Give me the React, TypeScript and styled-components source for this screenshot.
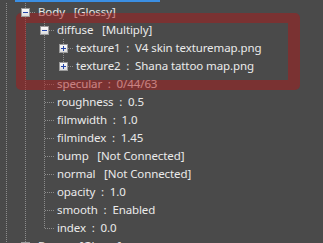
import React from 'react';
import styled, { createGlobalStyle, css } from 'styled-components';

type LineKind = 'none' | 'full' | 'top';

interface NodeRow {
    guides: LineKind[];
    branch?: boolean;
    expander?: 'plus' | 'minus';
    label: string;
}

const rows: NodeRow[] = [
    { guides: ['full', 'full'], expander: 'minus', label: 'Body\u00a0\u00a0 [Glossy]' },
    { guides: ['full', 'full', 'full'], expander: 'minus', label: 'diffuse\u00a0\u00a0 [Multiply]' },
    { guides: ['full', 'full', 'full', 'full'], expander: 'plus', label: 'texture1\u00a0 :\u00a0 V4 skin texturemap.png' },
    { guides: ['full', 'full', 'full', 'top'], expander: 'plus', label: 'texture2\u00a0 :\u00a0 Shana tattoo map.png' },
    { guides: ['full', 'full', 'full'], branch: true, label: 'specular\u00a0 :\u00a0 0/44/63' },
    { guides: ['full', 'full', 'full'], branch: true, label: 'roughness\u00a0 :\u00a0 0.5' },
    { guides: ['full', 'full', 'full'], branch: true, label: 'filmwidth\u00a0 :\u00a0 1.0' },
    { guides: ['full', 'full', 'full'], branch: true, label: 'filmindex\u00a0 :\u00a0 1.45' },
    { guides: ['full', 'full', 'full'], branch: true, label: 'bump\u00a0\u00a0 [Not Connected]' },
    { guides: ['full', 'full', 'full'], branch: true, label: 'normal\u00a0\u00a0 [Not Connected]' },
    { guides: ['full', 'full', 'full'], branch: true, label: 'opacity\u00a0 :\u00a0 1.0' },
    { guides: ['full', 'full', 'full'], branch: true, label: 'smooth\u00a0 :\u00a0 Enabled' },
    { guides: ['full', 'full', 'top'], branch: true, label: 'index\u00a0 :\u00a0 0.0' },
    { guides: ['full', 'full'], expander: 'plus', label: 'Brows\u00a0\u00a0 [Glossy]' },
];

const App: React.FC = () => {
    return (
        <Panel>
            <GlobalStyle />
            <Tree>
                <SelectedRow>
                    <Highlight />
                </SelectedRow>
                {rows.map((row, i) => {
                    const last = row.guides.length - 1;
                    return (
                        <Row key={i}>
                            {row.guides.map((kind, g) => (
                                <Guide key={g} line={kind} branch={g === last && (row.branch || !!row.expander)}>
                                    {g === last && row.expander && <Expander kind={row.expander} />}
                                </Guide>
                            ))}
                            <Label>{row.label}</Label>
                        </Row>
                    );
                })}
            </Tree>
            {/* annotation frame drawn over the tree */}
            <Frame />
        </Panel>
    );
};

export default App;

// Styled Components
const GlobalStyle = createGlobalStyle`
  html, body {
    margin: 0;
    padding: 0;
    background: #4a4a4a;
    overflow: hidden;
  }
`;

const Panel = styled.div`
  position: relative;
  width: 323px;
  height: 243px;
  overflow: hidden;
  background: #4a4a4a;
  font-family: "Noto Sans", "Open Sans", sans-serif;
  font-size: 11.5px;
  letter-spacing: -0.1px;
  color: #ebebeb;
`;

const Tree = styled.div`
  display: flex;
  flex-direction: column;
  margin-top: -15px;
`;

const Row = styled.div`
  display: flex;
  align-items: center;
  height: 18px;
  white-space: nowrap;
`;

const SelectedRow = styled(Row)`
  align-items: flex-start;
`;

const Highlight = styled.div`
  margin-left: 15px;
  width: 145px;
  height: 17px;
  background: #3b8fe3;
`;

const dotsV = 'repeating-linear-gradient(to bottom, #8c8c8c 0 1px, transparent 1px 2px)';
const dotsH = 'repeating-linear-gradient(to right, #8c8c8c 0 1px, transparent 1px 2px)';

const Guide = styled.div<{ line: LineKind; branch: boolean }>`
  position: relative;
  width: 19px;
  height: 18px;
  flex-shrink: 0;

  &::before {
    content: '';
    position: absolute;
    left: 6px;
    top: 0;
    width: 1px;
    height: ${p => (p.line === 'top' ? '9px' : '18px')};
    background: ${p => (p.line === 'none' ? 'none' : dotsV)};
  }

  ${p =>
        p.branch &&
        css`
      &::after {
        content: '';
        position: absolute;
        left: 7px;
        top: 9px;
        width: 9px;
        height: 1px;
        background: ${dotsH};
      }
    `}
`;

const Expander = styled.div<{ kind: 'plus' | 'minus' }>`
  position: absolute;
  left: 2px;
  top: 5px;
  width: 7px;
  height: 7px;
  border: 1px solid #9a9a9a;
  background: linear-gradient(#fbfbfb, #dcdcdc);
  z-index: 1;

  &::before {
    content: '';
    position: absolute;
    left: 1px;
    top: 3px;
    width: 5px;
    height: 1px;
    background: #2445a8;
  }

  ${p =>
        p.kind === 'plus' &&
        css`
      &::after {
        content: '';
        position: absolute;
        left: 3px;
        top: 1px;
        width: 1px;
        height: 5px;
        background: #2445a8;
      }
    `}
`;

const Label = styled.span`
  line-height: 18px;
`;

const Frame = styled.div`
  position: absolute;
  left: 16px;
  top: 13px;
  width: 262px;
  height: 57px;
  border: 10px solid rgba(170, 26, 26, 0.5);
  border-right-width: 12px;
  border-radius: 5px;
  pointer-events: none;
`;
